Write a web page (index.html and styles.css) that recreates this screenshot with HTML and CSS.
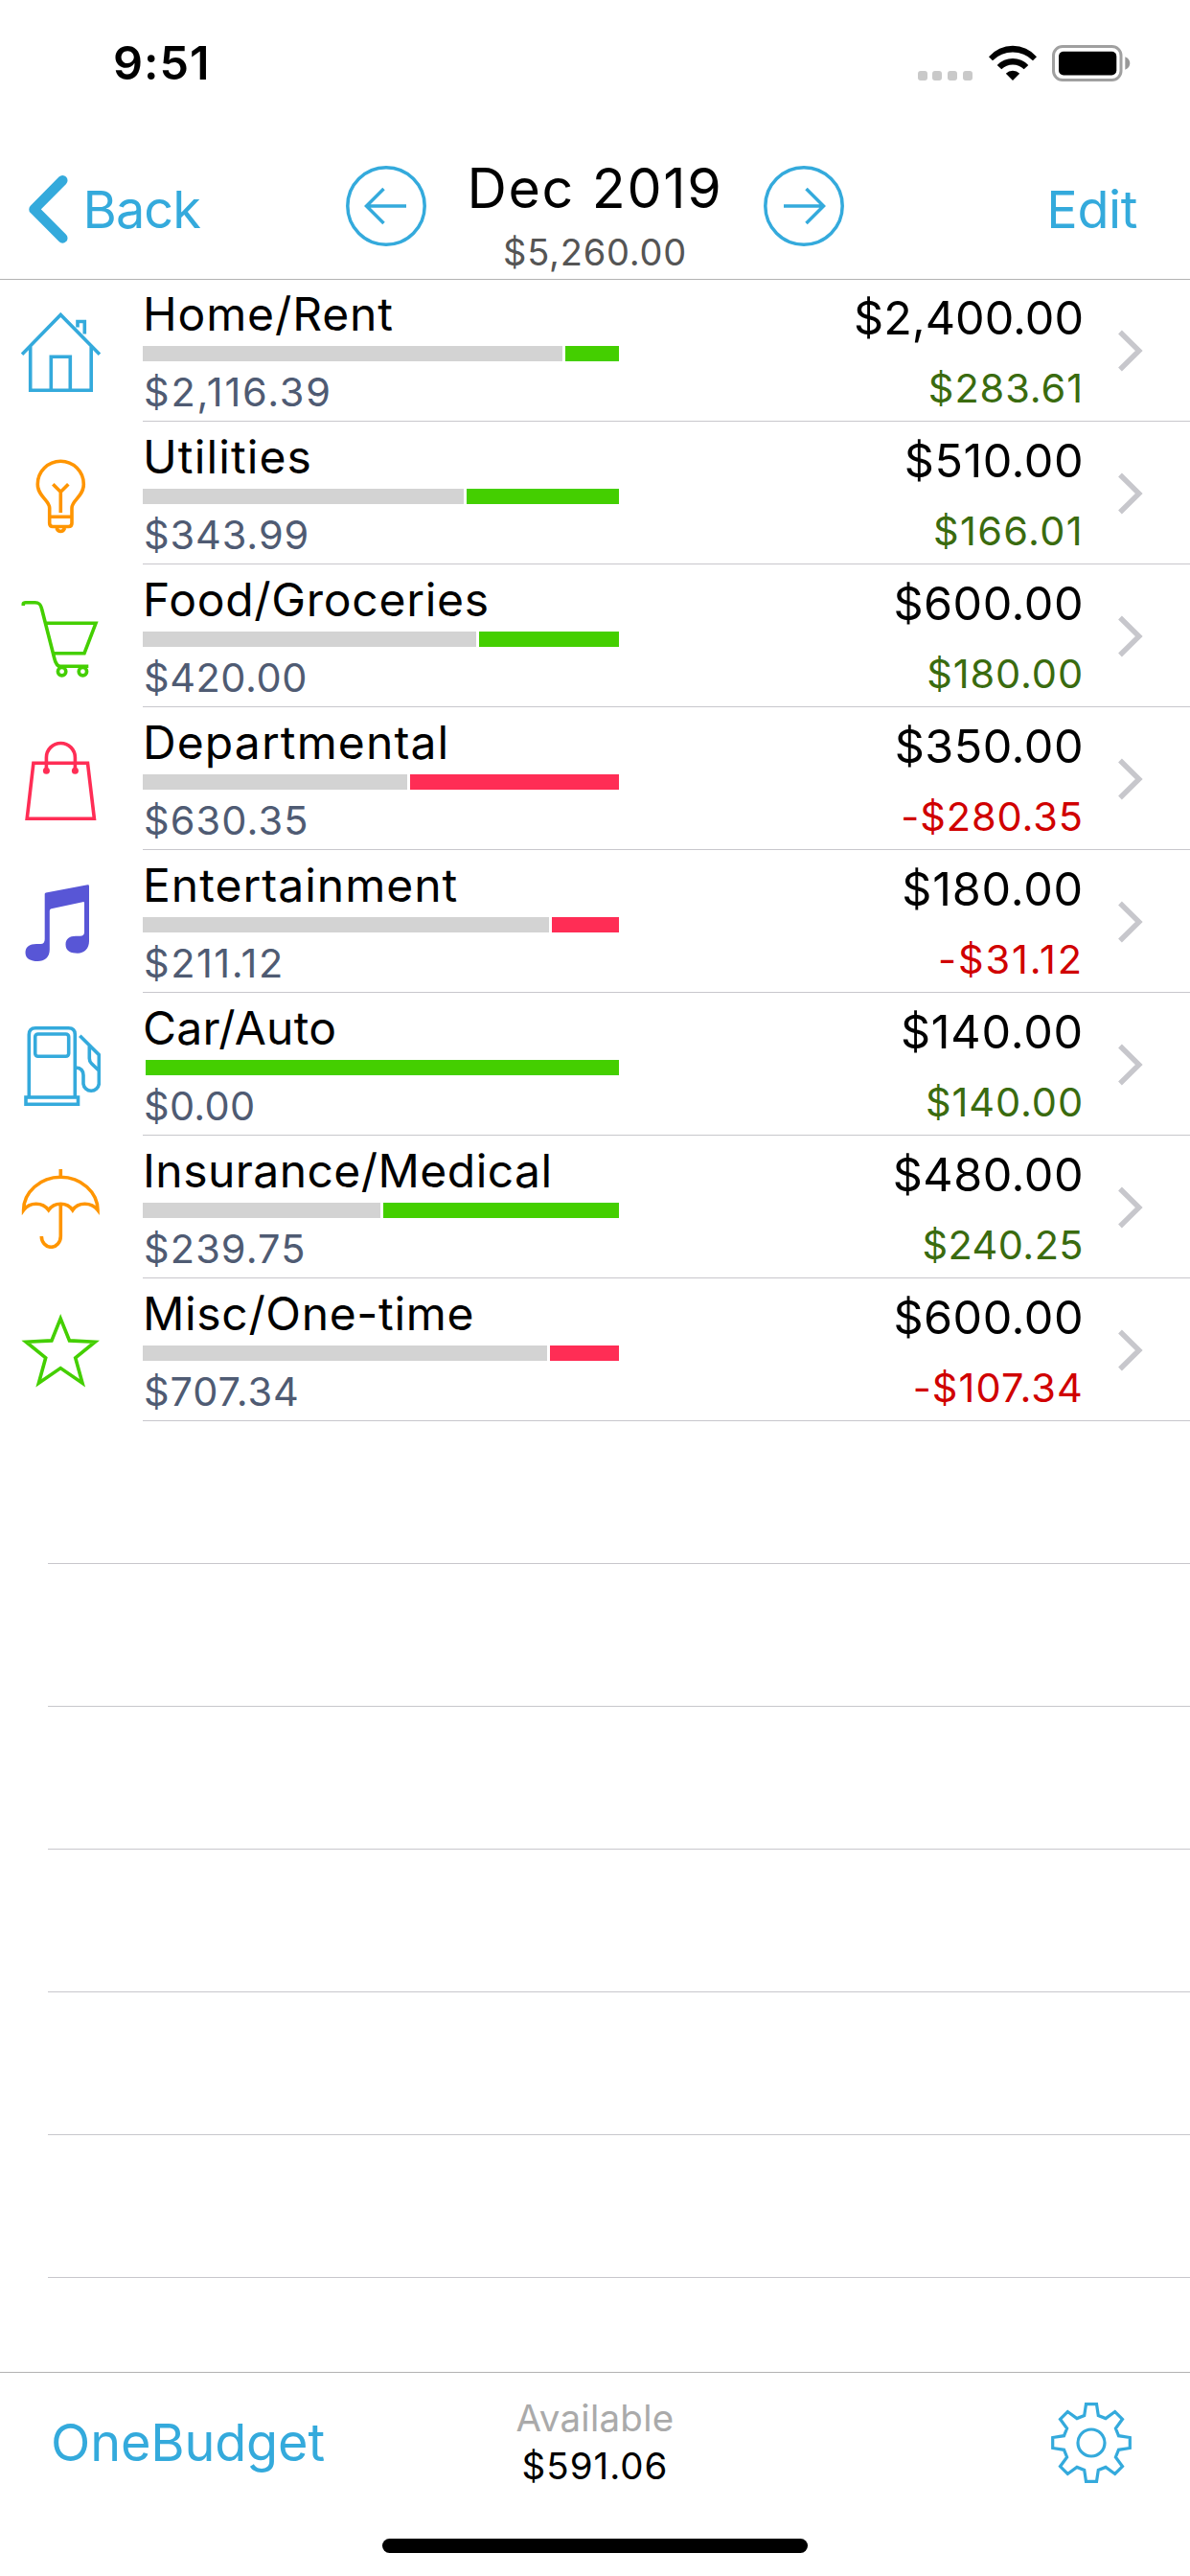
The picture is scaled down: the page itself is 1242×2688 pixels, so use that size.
FILE: index.html
```
<!DOCTYPE html>
<html lang="en">
<head>
<meta charset="utf-8">
<title>OneBudget</title>
<link rel="stylesheet" href="styles.css">
</head>
<body>
<div class="screen">
  <header class="header">
    <div class="status">
      <span class="clock">9:51</span>
      <div class="status-icons">
        <div class="signal"><i></i><i></i><i></i><i></i></div>
        <svg class="wifi" viewBox="0 0 50 37"><path d="M0 12.3A33 33 0 0 1 50 12.3L46 16.2A30 30 0 0 0 4 16.2ZM8.7 20.9A22.5 22.5 0 0 1 41.3 20.9L36.7 25.2A17 17 0 0 0 13.3 25.2ZM17.8 29.8A10 10 0 0 1 32.2 29.8L25 37Z"/></svg>
        <svg class="battery" viewBox="0 0 82 38"><rect x="1.5" y="1.5" width="70.5" height="35" rx="9.5" fill="none" stroke="#a0a0a0" stroke-width="3"/><rect x="7" y="6.7" width="60.3" height="24.7" rx="5"/><path d="M76.3 12.2Q81.3 14.5 81.3 19T76.3 25.8Z" fill="#989898"/></svg>
      </div>
    </div>
    <nav class="nav">
      <a class="back"><svg viewBox="0 0 41 71"><path d="M35.3 5.3L5.5 35.4L35.3 65.4"/></svg><span>Back</span></a>
      <div class="month">
        <svg class="round" viewBox="0 0 84 84"><circle cx="42" cy="42" r="40.2"/><path d="M63 42H21M39.5 24L21.5 42L39.5 60"/></svg>
        <div class="heading"><h1>Dec 2019</h1><p>$5,260.00</p></div>
        <svg class="round" viewBox="0 0 84 84"><circle cx="42" cy="42" r="40.2"/><path d="M21 42H63M44.5 24L62.5 42L44.5 60"/></svg>
      </div>
      <a class="edit">Edit</a>
    </nav>
  </header>

  <main class="list">
    <section class="row home">
      <svg class="icon blue" viewBox="0 0 83 83"><path d="M1 43.7L41.3 2.4L82 43.7M9.7 35V81.2H73.2V35M31.3 81V46.2H51.3V81M59 15.5V9.5H66.3V22.5"/></svg>
      <div class="body"><div class="spent"><h2>Home/Rent</h2><div class="bar"><i style="width:88.18%"></i><b class="good"></b></div><p>$2,116.39</p></div>
      <div class="amounts"><strong>$2,400.00</strong><em>$283.61</em></div><svg class="chevron" viewBox="0 0 26 44"><path d="M2 2.5L21.8 22L2 41.5"/></svg></div>
    </section>
    <section class="row utilities">
      <svg class="icon orange" viewBox="0 0 83 83"><path d="M29.7 71V55C29.7 47 17.3 43 17.3 30.3A24 24 0 0 1 65.3 30.3C65.3 43 53 47 53 55V71Q53 74.5 49.5 74.5H33.2Q29.7 74.5 29.7 71ZM29.7 64.3H53M41.3 60V38.3M33.3 30.3L41.3 38.3L49.3 30.3M37 76Q38.5 79.5 41.3 79.5T45.6 76"/></svg>
      <div class="body"><div class="spent"><h2>Utilities</h2><div class="bar"><i style="width:67.45%"></i><b class="good"></b></div><p>$343.99</p></div>
      <div class="amounts"><strong>$510.00</strong><em>$166.01</em></div><svg class="chevron" viewBox="0 0 26 44"><path d="M2 2.5L21.8 22L2 41.5"/></svg></div>
    </section>
    <section class="row food">
      <svg class="icon green" viewBox="0 0 83 83"><path d="M2.3 8V6Q2.5 4.7 5 4.7H14.5C19 4.7 20.5 6.5 21.5 11L34.5 62Q36.5 71.3 41 71.3H68.5V73M26.4 26.3H78L66 57.7H33.6"/><circle cx="42.6" cy="76.7" r="4.2"/><circle cx="64.4" cy="76.7" r="4.2"/></svg>
      <div class="body"><div class="spent"><h2>Food/Groceries</h2><div class="bar"><i style="width:70%"></i><b class="good"></b></div><p>$420.00</p></div>
      <div class="amounts"><strong>$600.00</strong><em>$180.00</em></div><svg class="chevron" viewBox="0 0 26 44"><path d="M2 2.5L21.8 22L2 41.5"/></svg></div>
    </section>
    <section class="row departmental">
      <svg class="icon pink" viewBox="0 0 83 83"><path d="M12.9 23.2H69.5L76.4 81.2H6.2ZM26.4 31V17.5A15 15 0 0 1 56.4 17.5V31"/><g class="solid"><circle cx="26.4" cy="31.3" r="3.5"/><circle cx="56.4" cy="31.3" r="3.5"/></g></svg>
      <div class="body"><div class="spent"><h2>Departmental</h2><div class="bar"><i style="width:55.52%"></i><b class="over"></b></div><p>$630.35</p></div>
      <div class="amounts"><strong>$350.00</strong><em class="neg">-$280.35</em></div><svg class="chevron" viewBox="0 0 26 44"><path d="M2 2.5L21.8 22L2 41.5"/></svg></div>
    </section>
    <section class="row entertainment">
      <svg class="icon violet" viewBox="0 0 83 83"><path class="solid" d="M24.7 10.7Q24.8 10 26 9.6L69.5 1.3Q71 1 71 2.7V60C71 68 66 72.7 59 72.7C52 72.7 46.5 70.5 46.5 63.5C46.5 58 50.5 54.8 57 54.8H61.5Q66 54.8 66 50.5V20.3Q66 18.8 64.3 19.2L31.5 26.3Q29.8 26.7 29.8 28.5V69C29.8 77 24.5 81 17.5 81C10 81 4.5 78.5 4.5 72C4.5 66 9 63 16 63H20.5Q24.7 63 24.7 58Z"/></svg>
      <div class="body"><div class="spent"><h2>Entertainment</h2><div class="bar"><i style="width:85.26%"></i><b class="over"></b></div><p>$211.12</p></div>
      <div class="amounts"><strong>$180.00</strong><em class="neg">-$31.12</em></div><svg class="chevron" viewBox="0 0 26 44"><path d="M2 2.5L21.8 22L2 41.5"/></svg></div>
    </section>
    <section class="row car">
      <svg class="icon blue" viewBox="0 0 83 83"><path d="M8.3 73.5V8.5Q8.3 1.8 15 1.8H49.5Q56.3 1.8 56.3 8.5V73.5M61.3 9.7L81.3 29.7V60A8.2 8.2 0 0 1 65 60V51Q65 43.5 57 43M71.3 20.7V33.5Q71.3 36.5 73.5 38.7L80.5 45.5"/><rect x="5" y="74" width="54.5" height="7.3"/><rect x="14.7" y="8" width="35" height="23.3" rx="3"/></svg>
      <div class="body"><div class="spent"><h2>Car/Auto</h2><div class="bar"><i style="width:0%"></i><b class="good"></b></div><p>$0.00</p></div>
      <div class="amounts"><strong>$140.00</strong><em>$140.00</em></div><svg class="chevron" viewBox="0 0 26 44"><path d="M2 2.5L21.8 22L2 41.5"/></svg></div>
    </section>
    <section class="row insurance">
      <svg class="icon orange" viewBox="0 0 83 83"><path d="M41.3 0V8.3M2.6 42.7C2.6 24 20 8.3 41.3 8.3S80 24 80 42.7Q75 36.2 66.5 36.2T53.8 42.7Q49.5 36.2 41.3 36.2T28.7 42.7Q24 36.2 15.7 36.2T2.6 42.7ZM41.3 36.2V70A10 11.3 0 0 1 21.3 70"/></svg>
      <div class="body"><div class="spent"><h2>Insurance/Medical</h2><div class="bar"><i style="width:49.95%"></i><b class="good"></b></div><p>$239.75</p></div>
      <div class="amounts"><strong>$480.00</strong><em>$240.25</em></div><svg class="chevron" viewBox="0 0 26 44"><path d="M2 2.5L21.8 22L2 41.5"/></svg></div>
    </section>
    <section class="row misc">
      <svg class="icon green" viewBox="0 0 83 83"><path d="M41.2 6.8L50.5 29.9L77.2 31.2L56.7 47.8L64 74.3L41.2 58.6L18.4 74.3L25.7 47.8L5.2 31.2L31.9 29.9Z"/></svg>
      <div class="body"><div class="spent"><h2>Misc/One-time</h2><div class="bar"><i style="width:84.82%"></i><b class="over"></b></div><p>$707.34</p></div>
      <div class="amounts"><strong>$600.00</strong><em class="neg">-$107.34</em></div><svg class="chevron" viewBox="0 0 26 44"><path d="M2 2.5L21.8 22L2 41.5"/></svg></div>
    </section>
    <div class="blank"></div><div class="blank"></div><div class="blank"></div><div class="blank"></div><div class="blank"></div><div class="blank"></div>
  </main>

  <footer class="footer">
    <div class="tools">
      <a class="brand">OneBudget</a>
      <div class="available"><span>Available</span><b>$591.06</b></div>
      <svg class="gear" viewBox="-42 -42 84 84"><path d="M-5.5 -40.3H5.5L7.3 -28.5L15 -25.4L24.7 -32.5L32.5 -24.7L25.4 -15L28.5 -7.3L40.3 -5.5V5.5L28.5 7.3L25.4 15L32.5 24.7L24.7 32.5L15 25.4L7.3 28.5L5.5 40.3H-5.5L-7.3 28.5L-15 25.4L-24.7 32.5L-32.5 24.7L-25.4 15L-28.5 7.3L-40.3 5.5V-5.5L-28.5 -7.3L-25.4 -15L-32.5 -24.7L-24.7 -32.5L-15 -25.4L-7.3 -28.5Z"/><circle r="14"/></svg>
    </div>
    <div class="home-indicator"></div>
  </footer>
</div>
</body>
</html>
```
FILE: styles.css
```
* { box-sizing: border-box; margin: 0; padding: 0; }
body { background: #fff; color: #000; font-family: Inter, "Liberation Sans", sans-serif; }
h1, h2, strong, em, b, i { font-weight: 400; font-style: normal; }
svg { display: block; flex: none; }
.screen { display: flex; flex-direction: column; width: 1242px; height: 2688px; overflow: hidden; }

.header { height: 292px; border-bottom: 1px solid #b2b2b2; }
.status { display: flex; justify-content: space-between; height: 132px; padding: 36px 62px 0 118px; }
.clock { font-size: 48.5px; line-height: 60px; font-weight: 600; letter-spacing: 1px; }
.status-icons { display: flex; align-items: flex-start; padding-top: 11px; }
.signal { display: flex; gap: 5.6px; margin: 27px 17px 0 0; }
.signal i { width: 10px; height: 10px; border-radius: 3px; background: #c9c9c9; }
.wifi { width: 50px; height: 37px; margin-right: 16.5px; }
.battery { width: 82px; height: 38px; }

.nav { display: grid; grid-template-columns: 1fr 521px 1fr; height: 159px; color: #34aadc; }
.nav svg { fill: none; stroke: #34aadc; }
.back { display: flex; align-items: center; gap: 15.5px; padding: 14px 0 0 30px; font-size: 54px; line-height: 60px; letter-spacing: -0.9px; }
.back svg { width: 41px; height: 71px; stroke-width: 10.5; stroke-linecap: round; stroke-linejoin: round; }
.month { display: flex; justify-content: space-between; }
.month .round { width: 84px; height: 84px; margin-top: 41px; stroke-width: 3.5; }
.heading { padding-top: 32.5px; text-align: center; }
.heading h1 { font-size: 57.3px; line-height: 62px; letter-spacing: 1.7px; color: #000; }
.heading p { margin-top: 13.5px; font-size: 38px; line-height: 46px; letter-spacing: 0.77px; color: #555; }
.edit { display: flex; align-items: center; justify-content: flex-end; padding: 14px 55px 0 0; font-size: 54px; line-height: 60px; letter-spacing: -0.4px; }

.list { flex: 1; margin-top: -1px; }
.row { display: grid; grid-template-columns: 149px 1fr; height: 149px; }
.icon { width: 83px; height: 83px; margin: 35px 0 0 22px; fill: none; stroke: currentColor; stroke-width: 3.6; }
.icon .solid { fill: currentColor; stroke: none; }
.blue { color: #34aadc; }
.orange { color: #ff9500; }
.green { color: #44cf00; }
.pink { color: #ff2d55; }
.violet { color: #5856d6; }
.body { display: grid; grid-template-columns: 497px 1fr 75px; height: 149px; border-bottom: 1px solid #c8c7cc; }
.spent h2 { height: 70px; padding-top: 4px; font-size: 48px; line-height: 66px; letter-spacing: 0.8px; white-space: nowrap; }
.bar { display: flex; gap: 3px; height: 16px; }
.bar i { flex: none; background: #d3d3d3; }
.bar b { flex: 1; }
.good { background: #44cf00; }
.over { background: #ff2d55; }
.spent p { height: 61px; margin: 2px 0 0 1px; font-size: 41.5px; line-height: 61px; letter-spacing: 0.9px; color: #4f5b73; }
.amounts { display: flex; flex-direction: column; align-items: flex-end; padding: 5.5px 36px 0 0; }
.amounts strong { font-size: 48.5px; line-height: 70px; letter-spacing: 0.5px; }
.amounts em { margin-top: 4px; font-size: 41.5px; line-height: 68px; letter-spacing: 0.9px; color: #3a6b0f; }
.amounts em.neg { color: #d00000; }
.chevron { width: 26px; height: 44px; margin-top: 52.5px; fill: none; stroke: #c7c7cc; stroke-width: 5.4; }

/* tracking of each row's texts */
.home h2 { letter-spacing: 0.87px; }
.home .spent p { letter-spacing: 1.8px; }
.home strong { letter-spacing: 0; }
.utilities h2, .departmental h2 { letter-spacing: 1.12px; }
.utilities em { letter-spacing: 1.36px; }
.food h2 { letter-spacing: 0.72px; }
.food .spent p { letter-spacing: 0.54px; }
.departmental .spent p { letter-spacing: 1.1px; }
.entertainment h2 { letter-spacing: 1px; }
.entertainment .spent p { letter-spacing: 1.5px; }
.entertainment strong, .car strong { letter-spacing: 0.8px; }
.entertainment em { letter-spacing: 1.9px; }
.car h2 { letter-spacing: 0.27px; }
.car .spent p { letter-spacing: 0.29px; }
.insurance h2 { letter-spacing: 0.45px; }
.insurance .spent p { letter-spacing: 1.1px; }
.insurance em { letter-spacing: 0.4px; }
.misc h2 { letter-spacing: 0.66px; }
.misc em { letter-spacing: 1.1px; }

.blank { height: 149px; margin-left: 50px; border-bottom: 1px solid #c8c7cc; }

.footer { height: 213px; border-top: 1px solid #b2b2b2; }
.tools { display: grid; grid-template-columns: 1fr 300px 1fr; align-items: center; height: 146px; }
.brand { padding-left: 53px; font-size: 54px; line-height: 60px; letter-spacing: -0.15px; color: #34aadc; }
.available { display: flex; flex-direction: column; align-items: center; padding-bottom: 2px; font-size: 38.5px; line-height: 50px; }
.available span { letter-spacing: 0.25px; color: #aaa; }
.available b { letter-spacing: 1px; }
.gear { width: 84px; height: 84px; margin-right: 61px; justify-self: end; fill: none; stroke: #34aadc; stroke-width: 3.2; }
.home-indicator { width: 444px; height: 15px; margin: 27px auto 0; border-radius: 8px; background: #000; }
```
